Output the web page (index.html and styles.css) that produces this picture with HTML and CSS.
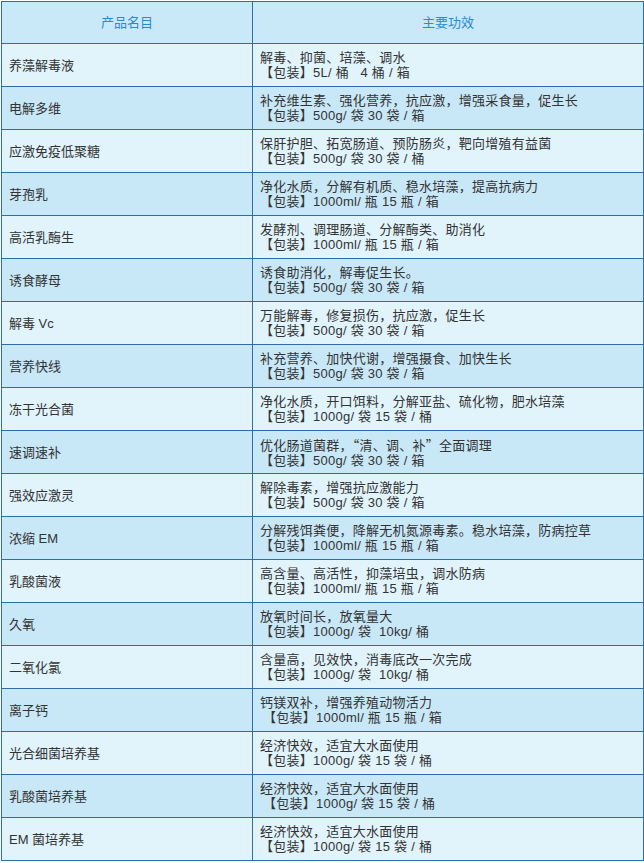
FILE: index.html
```html
<!DOCTYPE html>
<html lang="zh-CN">
<head>
<meta charset="utf-8">
<title>产品</title>
<link rel="stylesheet" href="styles.css">
</head>
<body>
<table class="tbl">
<thead>
<tr><th class="c1">产品名目</th><th class="c2">主要功效</th></tr>
</thead>
<tbody>
<tr><td class="c1">养藻解毒液</td><td class="c2">解毒、抑菌、培藻、调水<br>【包装】5L/ 桶&nbsp;&nbsp; 4 桶 / 箱</td></tr>
<tr><td class="c1">电解多维</td><td class="c2">补充维生素、强化营养，抗应激，增强采食量，促生长<br>【包装】500g/ 袋 30 袋 / 箱</td></tr>
<tr><td class="c1">应激免疫低聚糖</td><td class="c2">保肝护胆、拓宽肠道、预防肠炎，靶向增殖有益菌<br>【包装】500g/ 袋 30 袋 / 桶</td></tr>
<tr><td class="c1">芽孢乳</td><td class="c2">净化水质，分解有机质、稳水培藻，提高抗病力<br>【包装】1000ml/ 瓶 15 瓶 / 箱</td></tr>
<tr><td class="c1">高活乳酶生</td><td class="c2">发酵剂、调理肠道、分解酶类、助消化<br>【包装】1000ml/ 瓶 15 瓶 / 箱</td></tr>
<tr><td class="c1">诱食酵母</td><td class="c2">诱食助消化，解毒促生长。<br>【包装】500g/ 袋 30 袋 / 箱</td></tr>
<tr><td class="c1">解毒 Vc</td><td class="c2">万能解毒，修复损伤，抗应激，促生长<br>【包装】500g/ 袋 30 袋 / 箱</td></tr>
<tr><td class="c1">营养快线</td><td class="c2">补充营养、加快代谢，增强摄食、加快生长<br>【包装】500g/ 袋 30 袋 / 箱</td></tr>
<tr><td class="c1">冻干光合菌</td><td class="c2">净化水质，开口饵料，分解亚盐、硫化物，肥水培藻<br>【包装】1000g/ 袋 15 袋 / 桶</td></tr>
<tr><td class="c1">速调速补</td><td class="c2">优化肠道菌群，<span class="cjk">“</span>清、调、补<span class="cjk">”</span>全面调理<br>【包装】500g/ 袋 30 袋 / 箱</td></tr>
<tr><td class="c1">强效应激灵</td><td class="c2">解除毒素，增强抗应激能力<br>【包装】500g/ 袋 30 袋 / 箱</td></tr>
<tr><td class="c1">浓缩 EM</td><td class="c2">分解残饵粪便，降解无机氮源毒素。稳水培藻，防病控草<br>【包装】1000ml/ 瓶 15 瓶 / 箱</td></tr>
<tr><td class="c1">乳酸菌液</td><td class="c2">高含量、高活性，抑藻培虫，调水防病<br>【包装】1000ml/ 瓶 15 瓶 / 箱</td></tr>
<tr><td class="c1">久氧</td><td class="c2">放氧时间长，放氧量大<br>【包装】1000g/ 袋&nbsp; 10kg/ 桶</td></tr>
<tr><td class="c1">二氧化氯</td><td class="c2">含量高，见效快，消毒底改一次完成<br>【包装】1000g/ 袋&nbsp; 10kg/ 桶</td></tr>
<tr><td class="c1">离子钙</td><td class="c2">钙镁双补，增强养殖动物活力<br><span class="ind">【包装】1000ml/ 瓶 15 瓶 / 箱</span></td></tr>
<tr><td class="c1">光合细菌培养基</td><td class="c2">经济快效，适宜大水面使用<br>【包装】1000g/ 袋 15 袋 / 桶</td></tr>
<tr><td class="c1">乳酸菌培养基</td><td class="c2">经济快效，适宜大水面使用<br><span class="ind">【包装】1000g/ 袋 15 袋 / 桶</span></td></tr>
<tr><td class="c1">EM 菌培养基</td><td class="c2">经济快效，适宜大水面使用<br>【包装】1000g/ 袋 15 袋 / 桶</td></tr>
</tbody>
</table>
</body>
</html>
```
FILE: styles.css
```css
html, body {
  margin: 0;
  padding: 0;
  background: #ffffff;
}
body {
  font-family: "Liberation Sans", "Noto Sans CJK SC", sans-serif;
  font-size: 13px;
  color: #333333;
}
.tbl {
  border-collapse: collapse;
  width: 643px;
  margin: 1px 0 0 1px;
  table-layout: fixed;
}
.tbl th, .tbl td {
  border: 1px solid #2b6fa6;
  padding: 0 0 0 7px;
  line-height: 15px;
  vertical-align: middle;
  text-align: left;
}
.tbl th {
  height: 41px;
  background: #c9e8f8;
  color: #2b8ad3;
  font-weight: normal;
  text-align: center;
  padding: 0;
}
.tbl td {
  height: 42px;
}
.tbl td.c2 { letter-spacing: 0.25px; }
.tbl th.c1 { width: 250px; }
.tbl td.c1 { width: 243px; }
.tbl tbody tr:nth-child(odd) td { background: #e1f3fb; }
.tbl tbody tr:nth-child(even) td { background: #c8e7f7; }
.ind { padding-left: 3px; }
.cjk { font-family: "Noto Sans CJK SC", sans-serif; }
```
